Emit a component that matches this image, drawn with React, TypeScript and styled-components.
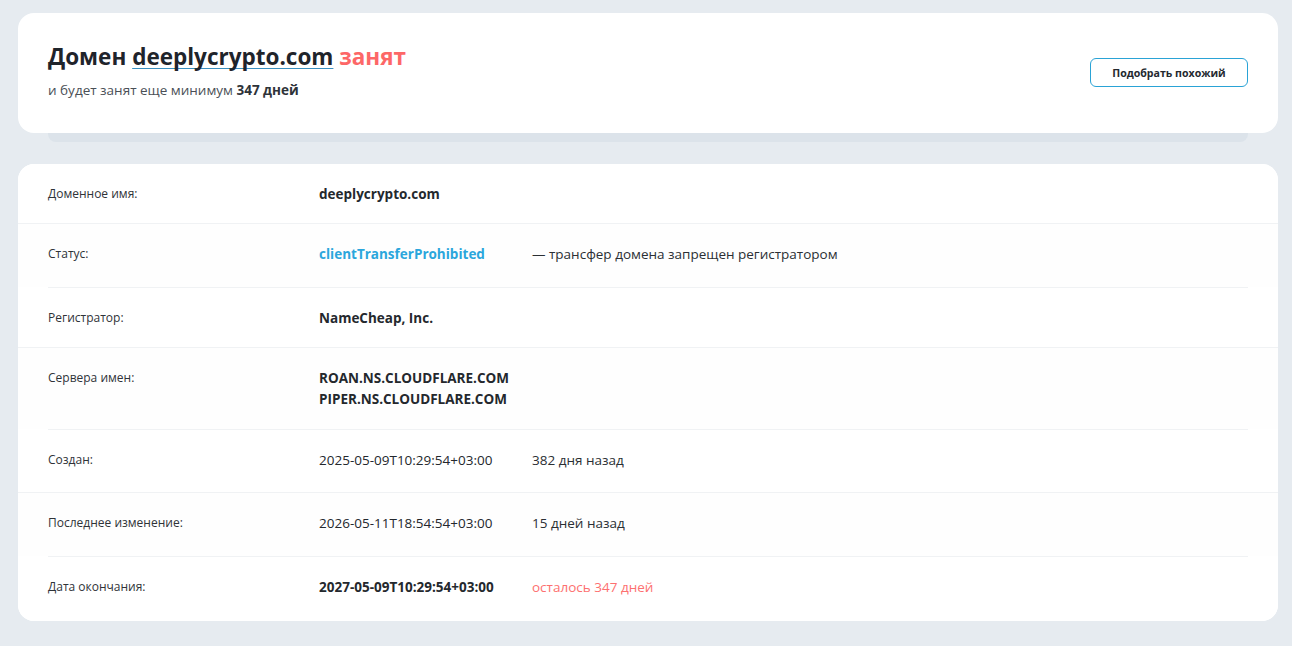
import React from "react";
import styled, { createGlobalStyle } from "styled-components";

const GlobalStyle = createGlobalStyle`
  html, body {
    margin: 0;
    padding: 0;
    background-color: #e6ebf0;
    font-family: "Open Sans", "Noto Sans", Arial, sans-serif;
    color: #222;
  }

  * {
    box-sizing: border-box;
  }
`;

const Page = styled.div`
  padding: 13px 14px 25px 18px;
`;

const HeadCard = styled.div`
  display: flex;
  align-items: center;
  justify-content: space-between;
  padding: 28px 30px 33px;
  background-color: #ffffff;
  border-radius: 16px;
`;

const HeadStack = styled.div`
  height: 9px;
  margin: 0 30px 22px;
  background-color: #dce3ea;
  border-radius: 0 0 8px 8px;
`;

const Title = styled.h1`
  margin: 0;
  font-size: 22.5px;
  line-height: 32px;
  font-weight: 700;
  color: #1f242b;
`;

const DomainLink = styled.span`
  text-decoration: underline;
  text-decoration-color: #3a8fc0;
  text-decoration-thickness: 1px;
  text-underline-offset: 3px;
  text-decoration-skip-ink: none;
`;

const Busy = styled.span`
  color: #fd6767;
`;

const Subtitle = styled.p`
  margin: 7px 0 0;
  font-size: 13.5px;
  line-height: 20px;
  color: #4a4f56;

  b {
    color: #2e3339;
  }
`;

const OutlineButton = styled.button`
  width: 158px;
  height: 29px;
  margin-top: 4px;
  border: 1px solid #2aa3d6;
  border-radius: 6px;
  background: #ffffff;
  font-family: inherit;
  font-size: 10.6px;
  font-weight: 700;
  color: #24292f;
  cursor: pointer;
`;

const InfoCard = styled.div`
  background-color: #ffffff;
  border-radius: 16px;
  overflow: hidden;
`;

const Row = styled.div<{ $shaded?: boolean }>`
  padding: 0 30px;
  background-color: ${(p) => (p.$shaded ? "#fefefe" : "#ffffff")};
  border-top: ${(p) => (p.$shaded ? "1px solid #f0f2f4" : "none")};
`;

const RowInner = styled.div<{ $inset?: boolean; $pad: number }>`
  display: grid;
  grid-template-columns: 271px 213px 1fr;
  align-items: start;
  padding: 20px 0 ${(p) => p.$pad}px;
  border-top: ${(p) => (p.$inset ? "1px solid #f0f2f4" : "none")};
`;

const Label = styled.div`
  font-size: 12px;
  line-height: 20px;
  color: #2f3338;
`;

const Value = styled.div<{ $bold?: boolean; $color?: string }>`
  font-size: 13.5px;
  line-height: 21px;
  font-weight: ${(p) => (p.$bold ? 700 : 400)};
  color: ${(p) => p.$color || "#24282d"};
`;

const Extra = styled.div<{ $color?: string }>`
  font-size: 13.5px;
  line-height: 21px;
  color: ${(p) => p.$color || "#2b2f34"};
`;

type RowData = {
  label: string;
  values: string[];
  bold?: boolean;
  color?: string;
  extra?: string;
  extraColor?: string;
};

const rows: RowData[] = [
  { label: "Доменное имя:", values: ["deeplycrypto.com"], bold: true },
  {
    label: "Статус:",
    values: ["clientTransferProhibited"],
    bold: true,
    color: "#2ba6dc",
    extra: "— трансфер домена запрещен регистратором",
  },
  { label: "Регистратор:", values: ["NameCheap, Inc."], bold: true },
  {
    label: "Сервера имен:",
    values: ["ROAN.NS.CLOUDFLARE.COM", "PIPER.NS.CLOUDFLARE.COM"],
    bold: true,
  },
  { label: "Создан:", values: ["2025-05-09T10:29:54+03:00"], extra: "382 дня назад" },
  {
    label: "Последнее изменение:",
    values: ["2026-05-11T18:54:54+03:00"],
    extra: "15 дней назад",
  },
  {
    label: "Дата окончания:",
    values: ["2027-05-09T10:29:54+03:00"],
    bold: true,
    extra: "осталось 347 дней",
    extraColor: "#fd7070",
  },
];

const bottomPad = (item: RowData, i: number) => {
  if (i === rows.length - 1) return 23;
  if (item.extra) return i % 2 === 1 ? 22 : 21;
  if (item.values.length > 1) return 19;
  return 18;
};

const App = () => {
  return (
    <Page>
      <GlobalStyle />
      <HeadCard>
        <div>
          <Title>
            Домен <DomainLink>deeplycrypto.com</DomainLink> <Busy>занят</Busy>
          </Title>
          <Subtitle>
            и будет занят еще минимум <b>347 дней</b>
          </Subtitle>
        </div>
        <OutlineButton>Подобрать похожий</OutlineButton>
      </HeadCard>
      <HeadStack />
      <InfoCard>
        {rows.map((item, i) => (
          <Row key={item.label} $shaded={i % 2 === 1}>
            <RowInner $inset={i > 0 && i % 2 === 0} $pad={bottomPad(item, i)}>
              <Label>{item.label}</Label>
              <div>
                {item.values.map((v) => (
                  <Value key={v} $bold={item.bold} $color={item.color}>
                    {v}
                  </Value>
                ))}
              </div>
              {item.extra && <Extra $color={item.extraColor}>{item.extra}</Extra>}
            </RowInner>
          </Row>
        ))}
      </InfoCard>
    </Page>
  );
};

export default App;
